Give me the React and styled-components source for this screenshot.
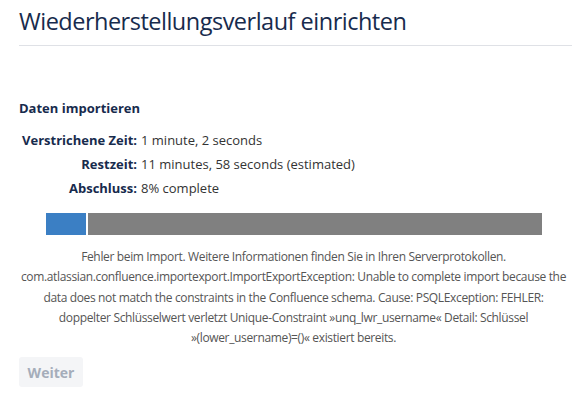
import styled, { createGlobalStyle } from "styled-components";

const GlobalStyle = createGlobalStyle`
  html, body {
    margin: 0;
    padding: 0;
    background: #fff;
  }
  body {
    font-family: "Open Sans", "Noto Sans", sans-serif;
    color: #333;
  }
`;

const stats = [
  { label: "Verstrichene Zeit:", value: "1 minute, 2 seconds" },
  { label: "Restzeit:", value: "11 minutes, 58 seconds (estimated)" },
  { label: "Abschluss:", value: "8% complete" },
];

const percent = 8;

const App = () => {
  return (
    <Page>
      <GlobalStyle />
      <Header>
        <Title>Wiederherstellungsverlauf einrichten</Title>
      </Header>
      <Section>
        <SectionTitle>Daten importieren</SectionTitle>
        <StatList>
          {stats.map(({ label, value }) => (
            <StatRow key={label}>
              <StatLabel>{label}</StatLabel>
              <StatValue>{value}</StatValue>
            </StatRow>
          ))}
        </StatList>
        <ProgressTrack>
          <ProgressFill style={{ width: `${percent}%` }} />
        </ProgressTrack>
        <ErrorMessage>
          Fehler beim Import. Weitere Informationen finden Sie in Ihren
          Serverprotokollen.
          <br />
          com.atlassian.confluence.importexport.ImportExportException: Unable to
          complete import because the data does not match the constraints in the
          Confluence schema. Cause: PSQLException: FEHLER: doppelter
          Schlüsselwert verletzt Unique-Constraint »unq_lwr_username« Detail:
          Schlüssel »(lower_username)=()« existiert bereits.
        </ErrorMessage>
        <ContinueButton disabled>Weiter</ContinueButton>
      </Section>
    </Page>
  );
};

const Page = styled.div`
  padding: 0 4px 0 19px;
`;

const Header = styled.div`
  border-bottom: 1px solid #dfe1e6;
  margin-right: -4px;
  padding: 6px 0 9px;
`;

const Title = styled.h1`
  margin: 0;
  font-size: 23.5px;
  font-weight: 400;
  letter-spacing: -0.5px;
  line-height: 30px;
  color: #172b4d;
`;

const Section = styled.div`
  padding-top: 52px;
`;

const SectionTitle = styled.h4`
  margin: 0 0 12px;
  font-size: 13px;
  font-weight: 700;
  line-height: 20px;
  color: #172b4d;
`;

const StatList = styled.div`
  display: flex;
  flex-direction: column;
  gap: 4px;
  padding-left: 3px;
`;

const StatRow = styled.div`
  display: grid;
  grid-template-columns: 115px 1fr;
  column-gap: 4px;
  font-size: 13px;
  line-height: 20px;
`;

const StatLabel = styled.span`
  text-align: right;
  font-weight: 700;
  color: #172b4d;
  white-space: nowrap;
`;

const StatValue = styled.span`
  color: #333;
`;

const ProgressTrack = styled.div`
  margin: 15px 26px 0 27px;
  height: 22px;
  background: #808080;
  display: flex;
`;

const ProgressFill = styled.div`
  background: #3b7fc4;
  border-right: 2px solid #fff;
`;

const ErrorMessage = styled.p`
  margin: 12px 0 0;
  text-align: center;
  font-size: 12px;
  letter-spacing: -0.35px;
  line-height: 20.25px;
  color: #555;
`;

const ContinueButton = styled.button`
  margin-top: 9px;
  width: 64px;
  height: 30px;
  padding: 0;
  border: none;
  border-radius: 3px;
  background: #f4f5f7;
  color: #a5adba;
  font-family: inherit;
  font-size: 14px;
  font-weight: 700;
  cursor: not-allowed;
`;

export default App;
